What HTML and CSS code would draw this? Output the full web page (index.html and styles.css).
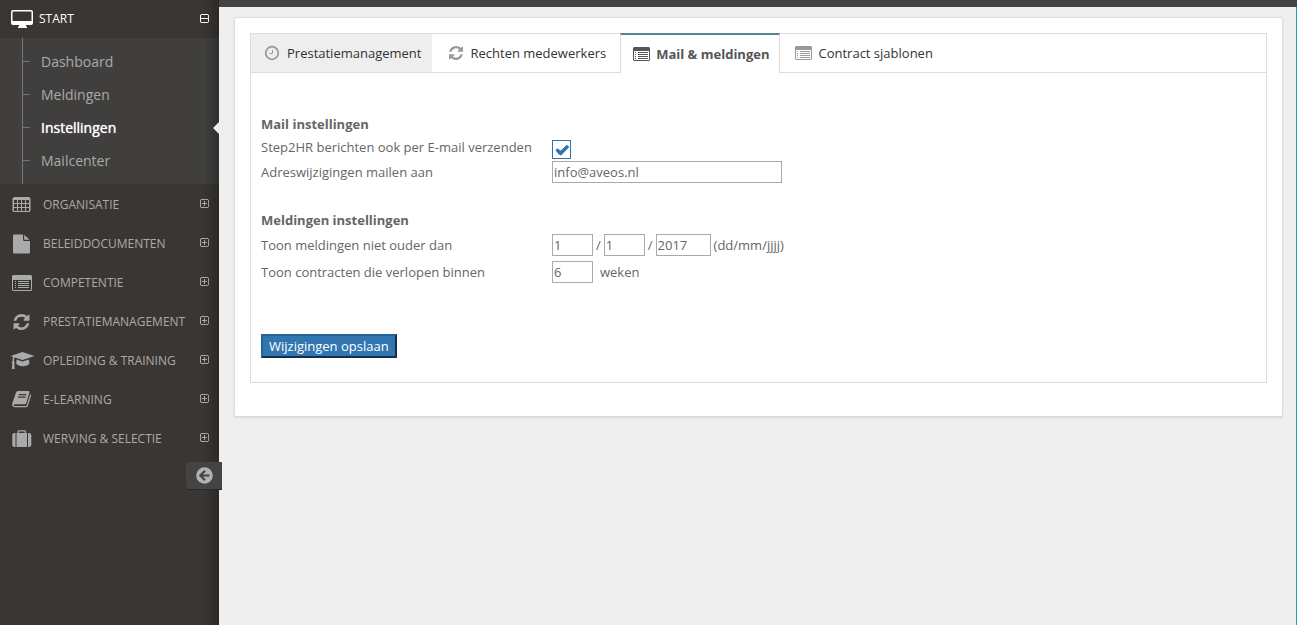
FILE: index.html
```html
<!DOCTYPE html>
<html lang="nl">
<head>
<meta charset="utf-8">
<title>Instellingen</title>
<link rel="stylesheet" href="styles.css">
</head>
<body>
<svg class="defs" aria-hidden="true">
  <symbol id="i-list" viewBox="0 0 20 16"><path fill="currentColor" fill-rule="evenodd" d="M1.500 0h17A1.500 1.500 0 0 1 20 1.500v13a1.500 1.500 0 0 1-1.500 1.500h-17A1.500 1.500 0 0 1 0 14.500v-13A1.500 1.500 0 0 1 1.500 0zM1 5v9.500a.5.5 0 0 0 .5.5h17a.5.5 0 0 0 .5-.5V5z"/><path fill="currentColor" d="M3 6h1v1H3zm3 0h11v1H6zM3 8h1v1H3zm3 0h11v1H6zM3 10h1v1H3zm3 0h11v1H6zM3 12h1v1H3zm3 0h11v1H6z"/></symbol>
  <symbol id="i-list-small" viewBox="0 0 17 14"><path fill="currentColor" fill-rule="evenodd" d="M1 0h15l1 1v12l-1 1H1l-1-1V1zM1 4v9h15V4z"/><path fill="currentColor" d="M2 5h1v1H2zm3 0h10v1H5zM2 7h1v1H2zm3 0h10v1H5zM2 9h1v1H2zm3 0h10v1H5zM2 11h1v1H2zm3 0h10v1H5z"/></symbol>
  <symbol id="i-refresh" viewBox="0 0 1536 1536"><path fill="currentColor" d="M1511 928q0 5-1 7-64 268-268 434.500T764 1536q-146 0-282.500-55T238 1324l-129 129q-19 19-45 19t-45-19-19-45V960q0-26 19-45t45-19h448q26 0 45 19t19 45-19 45l-137 137q71 66 161 102t187 36q134 0 250-65t186-179q11-17 53-117 8-23 30-23h192q13 0 22.500 9.500t9.500 22.500zm25-800v448q0 26-19 45t-45 19h-448q-26 0-45-19t-19-45 19-45l138-138Q969 256 768 256q-134 0-250 65T332 500q-11 17-53 117-8 23-30 23H50q-13 0-22.500-9.500T18 608v-7q65-268 270-434.500T768 0q146 0 284 55.500T1297 212l130-129q19-19 45-19t45 19 19 45z"/></symbol>
  <symbol id="i-plus" viewBox="0 0 9 9"><path fill="none" stroke="currentColor" d="M1 .5h7l.5.5v7l-.5.5H1L.5 8V1zM2 4.500h5M4.500 2v5"/></symbol>
</svg>
<div class="app">
  <aside class="sidebar">
    <nav>
      <a class="item current" href="#start">
        <svg class="icon" viewBox="0 0 22 18"><path fill="currentColor" fill-rule="evenodd" d="M2 0h18a2 2 0 0 1 2 2v11a2 2 0 0 1-2 2h-5v1l1 1v1H7v-1l1-1v-1H2a2 2 0 0 1-2-2V2a2 2 0 0 1 2-2zM1.500 2v9h19V2L20 1.500H2z"/></svg>
        <span class="label">START</span>
        <svg class="toggle" viewBox="0 0 9 9"><path fill="none" stroke="currentColor" d="M1 .5h7l.5.5v7l-.5.5H1L.5 8V1zM1 4.500h7"/></svg>
      </a>
      <ul class="submenu">
        <li><a href="#dashboard">Dashboard</a></li>
        <li><a href="#meldingen">Meldingen</a></li>
        <li class="active"><a href="#instellingen">Instellingen</a></li>
        <li><a href="#mailcenter">Mailcenter</a></li>
      </ul>
      <a class="item" href="#organisatie">
        <svg class="icon" viewBox="0 0 22 18"><path fill="currentColor" fill-rule="evenodd" d="M2 1h15l1.500 1.500v12L17.500 16h-16L.5 15V2.500zM2 4v3h3V4zm4 0v3h3V4zm4 0v3h3V4zm4 0v3h3V4zM2 8v3h3V8zm4 0v3h3V8zm4 0v3h3V8zm4 0v3h3V8zM2 12v3h3v-3zm4 0v3h3v-3zm4 0v3h3v-3zm4 0v3h3v-3z"/></svg>
        <span class="label">ORGANISATIE</span>
        <svg class="toggle"><use href="#i-plus"/></svg>
      </a>
      <a class="item" href="#beleid">
        <svg class="icon" viewBox="0 0 22 18"><path fill="currentColor" d="M2-.5h9v5A1.500 1.500 0 0 0 12.500 6H18v11.500a1 1 0 0 1-1 1H2a1 1 0 0 1-1-1V.5a1 1 0 0 1 1-1zM12.200-.3l5.300 5.100h-5.300z"/></svg>
        <span class="label">BELEIDDOCUMENTEN</span>
        <svg class="toggle"><use href="#i-plus"/></svg>
      </a>
      <a class="item" href="#competentie">
        <svg class="icon"><use href="#i-list" x="0" y="1" width="20" height="16"/></svg>
        <span class="label">COMPETENTIE</span>
        <svg class="toggle"><use href="#i-plus"/></svg>
      </a>
      <a class="item" href="#prestatie">
        <svg class="icon"><use href="#i-refresh" x="1" y="1" width="17" height="16"/></svg>
        <span class="label">PRESTATIEMANAGEMENT</span>
        <svg class="toggle"><use href="#i-plus"/></svg>
      </a>
      <a class="item" href="#opleiding">
        <svg class="icon" viewBox="1 0 22 18"><path fill="currentColor" d="M11.500 0l12 4-12 4L4 5.500C3 6.500 3 8 3 9.500c1 .6 1 1.700.3 2.300L3.700 17H.8l.5-5.200c-.8-.6-.7-1.800.2-2.300 0-1.700 0-3 .8-4.500L-.5 4zM5.500 7.500l6 2 6.500-2 .3 4C17 15 7 15 5.200 11.500z"/></svg>
        <span class="label">OPLEIDING &amp; TRAINING</span>
        <svg class="toggle"><use href="#i-plus"/></svg>
      </a>
      <a class="item" href="#elearning">
        <svg class="icon" viewBox="1 1 22 18"><path fill="currentColor" fill-rule="evenodd" d="M7 1h10.500q1.300.3.900 1.800L15.300 13q-.5 1.300-1.800 1.300H3.500q-1 .3-.6 1.200.3.500 1.200.5h10.600q.7 0 1-.8L19.400 4q1 .6.700 1.700l-3.200 10.100q-.5 1.500-2 1.500H4q-2.300 0-2.900-2-.2-1 .2-1.900L5 2.500Q5.500 1 7 1zM8 4l-.4 1.200h7.600l.4-1.200zM7.200 6.600l-.4 1.200h7.600l.4-1.200z"/></svg>
        <span class="label">E-LEARNING</span>
        <svg class="toggle"><use href="#i-plus"/></svg>
      </a>
      <a class="item" href="#werving">
        <svg class="icon" viewBox="0 0 22 18"><path fill="currentColor" fill-rule="evenodd" d="M5.500 3V1.500Q5.500.3 6.700.3h6Q14 .3 14 1.500V3h1v14H4.500V3zm1.300 0h6V1.600h-6zM3.500 3v14h-1A2.300 2.300 0 0 1 .3 14.700V5.300A2.300 2.300 0 0 1 2.500 3zM16 3h1a2.300 2.300 0 0 1 2.300 2.300v9.400A2.300 2.300 0 0 1 17 17h-1z"/></svg>
        <span class="label">WERVING &amp; SELECTIE</span>
        <svg class="toggle"><use href="#i-plus"/></svg>
      </a>
    </nav>
    <button class="collapse" type="button" aria-label="Menu inklappen">
      <svg width="17" height="17" viewBox="0 0 17 17"><circle cx="8.500" cy="8.500" r="8.300" fill="#b2b2b2"/><path fill="none" stroke="#444" stroke-width="2.200" d="M9 3.800L4.300 8.500 9 13.200M4.500 8.500h9"/></svg>
    </button>
  </aside>
  <main class="main">
    <section class="panel">
      <div class="tabbox">
        <nav class="tabs">
          <a class="tab hover" href="#t1"><svg class="tabicon" viewBox="0 0 18 16"><circle cx="9" cy="8" r="6.300" fill="none" stroke="currentColor" stroke-width="1.700"/><path fill="none" stroke="currentColor" d="M9.500 5v3.500H6.500"/></svg>Prestatiemanagement</a>
          <a class="tab" href="#t2"><svg class="tabicon"><use href="#i-refresh" x="2" y="1" width="16" height="14"/></svg>Rechten medewerkers</a>
          <a class="tab selected" href="#t3"><svg class="tabicon"><use href="#i-list-small" x="0" y="1" width="17" height="14"/></svg>Mail &amp; meldingen</a>
          <a class="tab" href="#t4"><svg class="tabicon"><use href="#i-list-small" x="1" y="1" width="17" height="14"/></svg>Contract sjablonen</a>
        </nav>
        <form class="form">
          <h2>Mail instellingen</h2>
          <div class="row"><label for="mail">Step2HR berichten ook per E-mail verzenden</label><input class="check" id="mail" type="checkbox" checked></div>
          <div class="row"><label for="adres">Adreswijzigingen mailen aan</label><input class="text wide" id="adres" type="text" value="info@aveos.nl"></div>
          <h2 class="second">Meldingen instellingen</h2>
          <div class="row tall"><label for="dag">Toon meldingen niet ouder dan</label><span class="date"><input class="text" id="dag" type="text" value="1"><span>/</span><input class="text" type="text" aria-label="Maand" value="1"><span>/</span><input class="text year" type="text" aria-label="Jaar" value="2017"><span>(dd/mm/jjjj)</span></span></div>
          <div class="row tall"><label for="weken">Toon contracten die verlopen binnen</label><span class="weeks"><input class="text" id="weken" type="text" value="6"><span>weken</span></span></div>
          <button class="save" type="submit">Wijzigingen opslaan</button>
        </form>
      </div>
    </section>
  </main>
</div>
</body>
</html>
```

FILE: styles.css
```css
* { box-sizing: border-box; }
body {
  margin: 0;
  font: 13px/20px "Open Sans", sans-serif;
  color: #666;
}
a { color: inherit; text-decoration: none; }
.defs { position: absolute; width: 0; height: 0; }
.app { display: flex; min-height: 100vh; }

.sidebar {
  position: relative;
  flex: 0 0 219px;
  background: #3a3633;
  color: #aaa;
}
.sidebar::after {
  content: "";
  position: absolute;
  inset: 0 0 0 auto;
  width: 16px;
  background: linear-gradient(to right, transparent, rgba(0, 0, 0, .25));
  pointer-events: none;
}
.item {
  display: flex;
  align-items: center;
  height: 39px;
  padding: 0 10px 0 12px;
}
.item.current { height: 38px; padding-left: 11px; color: #fff; }
.icon { width: 22px; height: 18px; overflow: visible; }
.label { flex: 1; padding-left: 9px; font-size: 12px; }
.current .label { padding-left: 6px; }
.toggle { width: 9px; height: 9px; margin-bottom: 2px; }

.submenu {
  margin: 0 0 1px;
  padding: 7px 0;
  list-style: none;
  background: linear-gradient(#777, #777) 22px 0 / 1px 100% no-repeat #403f3d;
  font-size: 14px;
}
.submenu li {
  position: relative;
  height: 33px;
  padding-left: 41px;
  line-height: 33px;
  background: linear-gradient(#777, #777) 23px 16px / 7px 1px no-repeat;
}
.submenu .active { color: #fff; text-shadow: 0 0 1px #fff; }
.submenu .active::after {
  content: "";
  position: absolute;
  z-index: 1;
  right: 0;
  top: 11px;
  border: 6px solid transparent;
  border-right-color: #eee;
  border-left: 0;
}
.collapse {
  position: absolute;
  z-index: 2;
  top: 462px;
  right: -3px;
  display: flex;
  align-items: center;
  justify-content: center;
  width: 36px;
  height: 27px;
  padding: 0;
  border: 0;
  border-radius: 4px 0 0 4px;
  background: #444;
  box-shadow: 0 1px 0 #2c2a28;
}

.main {
  flex: 1;
  min-width: 0;
  padding: 10px 14px 14px 15px;
  border-top: 7px solid #444340;
  background: #efefef;
  box-shadow: inset -1px 0 #12a9be;
}
.panel {
  padding: 15px 15px 33px;
  border: 1px solid #ddd;
  border-radius: 2px;
  background: #fff;
  box-shadow: 0 1px 2px rgba(0, 0, 0, .1);
}
.tabbox { border: 1px solid #ddd; }
.tabs {
  display: flex;
  height: 39px;
  border-bottom: 1px solid #ddd;
  color: #333;
}
.tab {
  display: flex;
  align-items: center;
  gap: 6px;
  padding: 0 14px;
}
.tabicon { width: 18px; height: 16px; color: #999; }
.tab.hover { padding: 0 11px 0 12px; background: #eee; }
.tab.selected {
  height: 40px;
  margin-top: -1px;
  padding: 0 10px 1px 12px;
  gap: 5px;
  border: 1px solid #ddd;
  border-top: 2px solid #578598;
  border-bottom: 0;
  background: #fff;
  color: #555;
  font-weight: 700;
}
.tab.selected .tabicon { color: #555; }

.form { padding: 41px 10px 24px; }
h2 { margin: 0; font-size: 13px; line-height: 20px; }
h2.second { margin: 26px 0 1px; }
.row {
  display: grid;
  grid-template-columns: 291px 1fr;
  align-items: center;
  height: 25px;
}
.row.tall { height: 27px; }
.date, .weeks { display: flex; align-items: center; gap: 3px; }
.weeks { gap: 7px; }
.text {
  width: 41px;
  height: 22px;
  padding: 0 1px;
  border: 1px solid #aaa;
  background: #fff;
  font: inherit;
  color: #666;
}
.text.year { width: 55px; }
.text.wide { width: 230px; }
.check {
  appearance: none;
  align-self: end;
  width: 19px;
  height: 19px;
  margin: 0;
  border: 1px solid #2d74b2;
}
.check:checked::before {
  content: "";
  display: block;
  width: 17px;
  height: 17px;
  background: #2d74b2;
  clip-path: polygon(14% 55%, 27% 42%, 44% 58%, 82% 22%, 96% 35%, 47% 85%, 35% 80%);
}
.save {
  display: block;
  margin-top: 49px;
  height: 24px;
  padding: 0 6px;
  border: 2px solid;
  border-color: #286499 #142f48 #142f48 #286499;
  background: #3276b1;
  color: #fff;
  font: inherit;
}
```
